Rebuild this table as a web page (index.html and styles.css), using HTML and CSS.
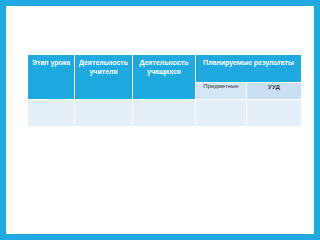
FILE: index.html
```html
<!DOCTYPE html>
<html>
<head>
<meta charset="utf-8">
<link rel="stylesheet" href="styles.css">
</head>
<body>
<div class="frame">
  <table class="plan">
    <colgroup>
      <col class="c1"><col class="c2"><col class="c3"><col class="c4"><col class="c5">
    </colgroup>
    <tr class="r1">
      <th rowspan="2" class="left">Этап урока</th>
      <th rowspan="2">Деятельность учителя</th>
      <th rowspan="2">Деятельность учащихся</th>
      <th colspan="2">Планируемые результаты</th>
    </tr>
    <tr class="r2">
      <td class="sub sub-a">Предметные</td>
      <td class="sub sub-b">УУД</td>
    </tr>
    <tr class="r3">
      <td class="body"></td><td class="body"></td><td class="body"></td><td class="body"></td><td class="body"></td>
    </tr>
  </table>
</div>
</body>
</html>
```

FILE: styles.css
```css
html, body {
  margin: 0;
  padding: 0;
  background: #ffffff;
}
.frame {
  box-sizing: border-box;
  width: 320px;
  height: 240px;
  border: 6px solid #1fa9e1;
  background: #ffffff;
  padding: 48px 0 0 21px;
}
.plan {
  border-collapse: collapse;
  table-layout: fixed;
  width: 274px;
  font-family: "Liberation Sans", Arial, sans-serif;
}
.c1 { width: 47px; }
.c2 { width: 58px; }
.c3 { width: 63px; }
.c4 { width: 51px; }
.c5 { width: 55px; }
.plan th, .plan td {
  border: 1px solid #ffffff;
  padding: 0;
}
.plan th {
  background: #1fa9e1;
  color: #ffffff;
  font-weight: bold;
  font-size: 7px;
  line-height: 9px;
  vertical-align: top;
  text-align: center;
  padding: 3px 1px 0;
}
.plan th.left {
  text-align: left;
  padding-left: 4px;
}
.r1 { height: 28px; }
.r2 { height: 17px; }
.r3 { height: 27px; }
.sub {
  font-size: 6px;
  color: #3a3a3a;
  vertical-align: top;
  text-align: center;
  padding-top: 5px;
}
.sub-a { background: #d3e6f6; }
.sub-b { background: #c9e0f4; font-weight: bold; font-size: 6.2px; }
.body { background: #e3eef8; }
```
